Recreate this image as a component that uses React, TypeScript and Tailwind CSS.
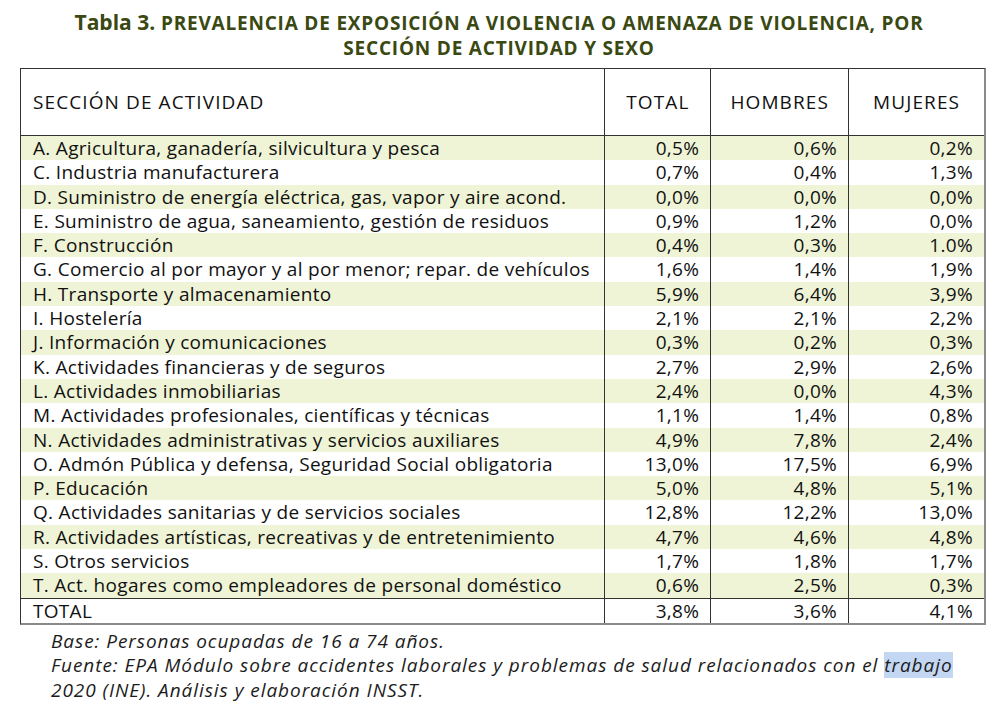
const rows: [string, string, string, string][] = [
  ["A. Agricultura, ganadería, silvicultura y pesca", "0,5%", "0,6%", "0,2%"],
  ["C. Industria manufacturera", "0,7%", "0,4%", "1,3%"],
  ["D. Suministro de energía eléctrica, gas, vapor y aire acond.", "0,0%", "0,0%", "0,0%"],
  ["E. Suministro de agua, saneamiento, gestión de residuos", "0,9%", "1,2%", "0,0%"],
  ["F. Construcción", "0,4%", "0,3%", "1.0%"],
  ["G. Comercio al por mayor y al por menor; repar. de vehículos", "1,6%", "1,4%", "1,9%"],
  ["H. Transporte y almacenamiento", "5,9%", "6,4%", "3,9%"],
  ["I. Hostelería", "2,1%", "2,1%", "2,2%"],
  ["J. Información y comunicaciones", "0,3%", "0,2%", "0,3%"],
  ["K. Actividades financieras y de seguros", "2,7%", "2,9%", "2,6%"],
  ["L. Actividades inmobiliarias", "2,4%", "0,0%", "4,3%"],
  ["M. Actividades profesionales, científicas y técnicas", "1,1%", "1,4%", "0,8%"],
  ["N. Actividades administrativas y servicios auxiliares", "4,9%", "7,8%", "2,4%"],
  ["O. Admón Pública y defensa, Seguridad Social obligatoria", "13,0%", "17,5%", "6,9%"],
  ["P. Educación", "5,0%", "4,8%", "5,1%"],
  ["Q. Actividades sanitarias y de servicios sociales", "12,8%", "12,2%", "13,0%"],
  ["R. Actividades artísticas, recreativas y de entretenimiento", "4,7%", "4,6%", "4,8%"],
  ["S. Otros servicios", "1,7%", "1,8%", "1,7%"],
  ["T. Act. hogares como empleadores de personal doméstico", "0,6%", "2,5%", "0,3%"],
];

function Row({ cells, shaded }: { cells: string[]; shaded: boolean }) {
  const bg = shaded ? "bg-[#eff4d6]" : "bg-white";
  return (
    <div className="flex h-[24.3px] leading-[24px]">
      <div className={`w-[584px] pl-[12px] ${bg} whitespace-nowrap`}>{cells[0]}</div>
      <div className={`w-[106px] border-l border-[#333] pr-[11px] text-right ${bg}`}>{cells[1]}</div>
      <div className={`w-[138px] border-l border-[#333] pr-[11px] text-right ${bg}`}>{cells[2]}</div>
      <div className={`w-[136px] border-l border-[#333] pr-[11px] text-right ${bg}`}>{cells[3]}</div>
    </div>
  );
}

export default function App() {
  return (
    <div className="w-[1008px] h-[708px] bg-white font-['Open_Sans',sans-serif] text-[#111]">
      <h1 className="pt-[10px] pr-[10px] text-center text-[#3a4812] font-bold text-[19px] leading-[25px] tracking-[0.8px]">
        <span className="text-[21px] tracking-normal">Tabla 3.</span> PREVALENCIA DE EXPOSICIÓN A VIOLENCIA O AMENAZA DE VIOLENCIA, POR
        <br />
        SECCIÓN DE ACTIVIDAD Y SEXO
      </h1>
      <div className="mt-[7px] ml-[20px] w-[966px] border-l border-t border-[#333] border-r-2 border-b-2 border-r-[#8a8a8a] border-b-[#8a8a8a] text-[19px] tracking-[0.3px]">
        <div className="flex h-[67px] items-center border-b border-[#333] tracking-[1.1px]">
          <div className="w-[584px] pl-[12px]">SECCIÓN DE ACTIVIDAD</div>
          <div className="w-[106px] h-full flex items-center justify-center border-l border-[#333]">TOTAL</div>
          <div className="w-[138px] h-full flex items-center justify-center border-l border-[#333]">HOMBRES</div>
          <div className="w-[136px] h-full flex items-center justify-center border-l border-[#333]">MUJERES</div>
        </div>
        {rows.map((r, i) => (
          <Row key={r[0]} cells={r} shaded={i % 2 === 0} />
        ))}
        <div className="border-t border-[#333]">
          <Row cells={["TOTAL", "3,8%", "3,6%", "4,1%"]} shaded={false} />
        </div>
      </div>
      <div className="mt-[4px] pl-[51px] italic text-[19px] leading-[24.5px] tracking-[0.95px] text-[#1c1c1c]">
        <div>Base: Personas ocupadas de 16 a 74 años.</div>
        <div>
          Fuente: EPA Módulo sobre accidentes laborales y problemas de salud relacionados con el{" "}
          <span className="bg-[#c3d6f2]">trabajo</span>
        </div>
        <div>2020 (INE). Análisis y elaboración INSST.</div>
      </div>
    </div>
  );
}
